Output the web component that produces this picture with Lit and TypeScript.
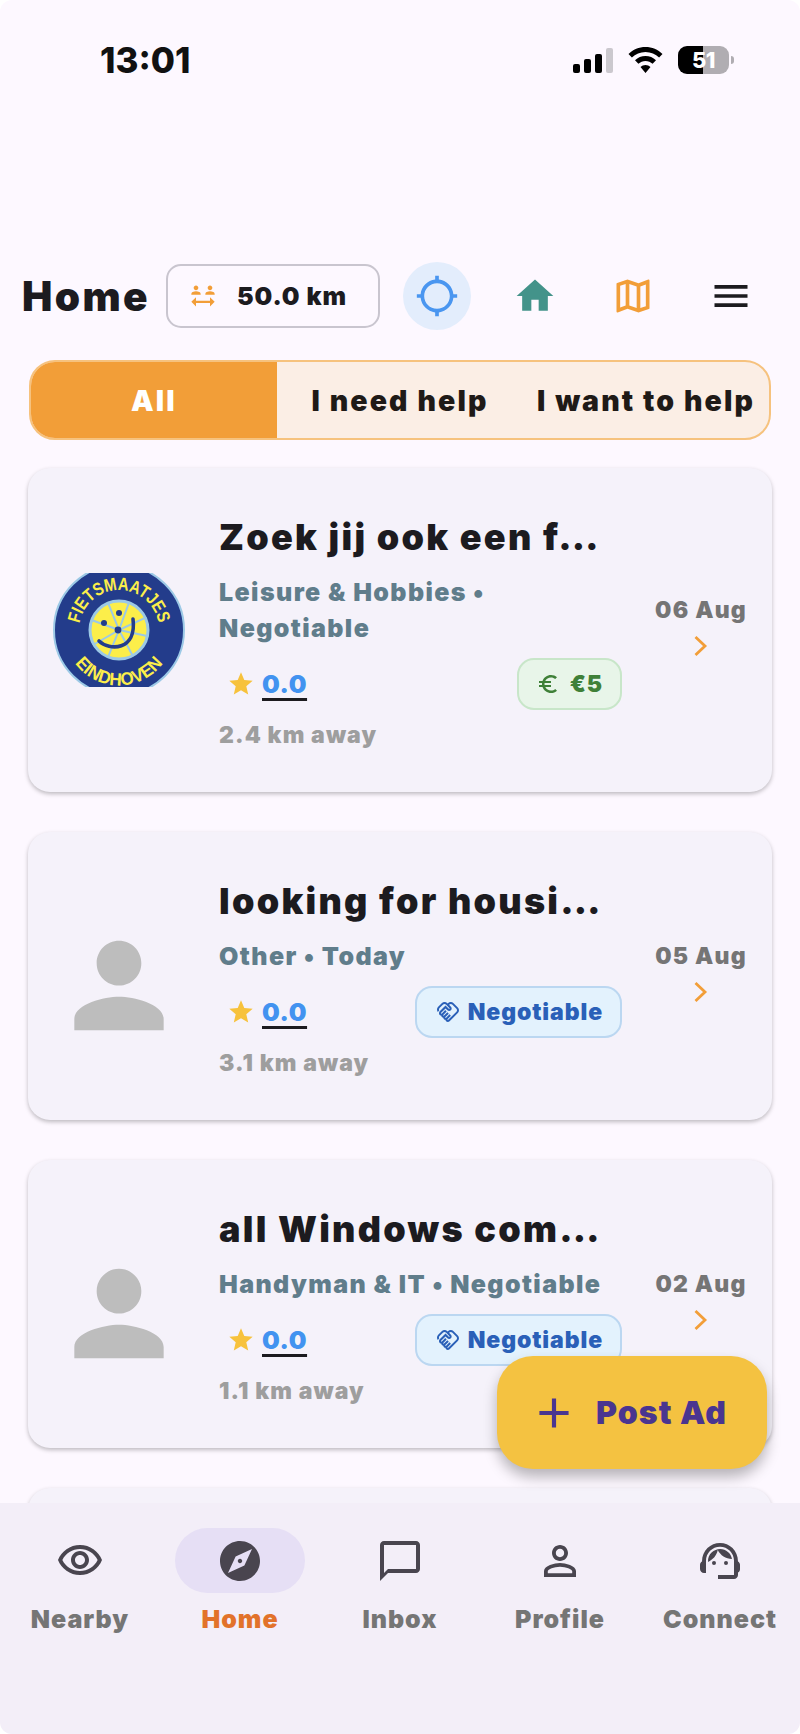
import { LitElement, html, css, svg } from "lit";
import { customElement } from "lit/decorators.js";

const P = {
  social: "M4,5c0-1.1,0.9-2,2-2s2,0.9,2,2S7.1,7,6,7S4,6.1,4,5z M8.78,8.58C7.93,8.21,6.99,8,6,8S4.07,8.21,3.22,8.58C2.48,8.9,2,9.62,2,10.43L2,11h8l0-0.57C10,9.62,9.52,8.9,8.78,8.58z M18,7c1.1,0,2-0.9,2-2s-0.9-2-2-2s-2,0.9-2,2S16.9,7,18,7z M20.78,8.58C19.93,8.21,18.99,8,18,8c-0.99,0-1.93,0.21-2.78,0.58C14.48,8.9,14,9.62,14,10.43L14,11h8l0-0.57C22,9.62,21.52,8.9,20.78,8.58z M22,17l-4-4v3H6v-3l-4,4l4,4v-3h12v3L22,17z",
  gps: "M20.94 11c-.46-4.17-3.77-7.48-7.94-7.94V1h-2v2.06C6.83 3.52 3.52 6.83 3.06 11H1v2h2.06c.46 4.17 3.77 7.48 7.94 7.94V23h2v-2.06c4.17-.46 7.48-3.77 7.94-7.94H23v-2h-2.06zM12 19c-3.87 0-7-3.13-7-7s3.13-7 7-7 7 3.13 7 7-3.13 7-7 7z",
  home: "M10 20v-6h4v6h5v-8h3L12 3 2 12h3v8z",
  map: "M20.5 3l-.16.03L15 5.1 9 3 3.36 4.9c-.21.07-.36.25-.36.48V20.5c0 .28.22.5.5.5l.16-.03L9 18.9l6 2.1 5.64-1.9c.21-.07.36-.25.36-.48V3.5c0-.28-.22-.5-.5-.5zM10 5.47l4 1.4v11.66l-4-1.4V5.47zm-5 .99l3-1.01v11.7l-3 1.16V6.46zm14 11.08l-3 1.01V6.86l3-1.16v11.84z",
  menu: "M3 18h18v-2H3v2zm0-5h18v-2H3v2zm0-7v2h18V6H3z",
  person: "M12 12c2.21 0 4-1.79 4-4s-1.79-4-4-4-4 1.79-4 4 1.79 4 4 4zm0 2c-2.67 0-8 1.34-8 4v2h16v-2c0-2.66-5.33-4-8-4z",
  star: "M12 17.27L18.18 21l-1.64-7.03L22 9.24l-7.19-.61L12 2 9.19 8.63 2 9.24l5.46 4.73L5.82 21z",
  euro: "M15 18.5c-2.51 0-4.68-1.42-5.76-3.5H15v-2H8.58c-.05-.33-.08-.66-.08-1s.03-.67.08-1H15V9H9.24C10.32 6.92 12.5 5.5 15 5.5c1.61 0 3.09.59 4.23 1.57L21 5.3C19.41 3.87 17.3 3 15 3c-3.92 0-7.24 2.51-8.48 6H3v2h3.06c-.04.33-.06.66-.06 1s.02.67.06 1H3v2h3.52c1.24 3.49 4.56 6 8.48 6 2.31 0 4.41-.87 6-2.3l-1.78-1.77c-1.13.98-2.6 1.57-4.22 1.57z",
  hand: "M12.22 19.85c-.18.18-.5.21-.71 0-.18-.18-.21-.5 0-.71l3.39-3.39-1.41-1.41-3.39 3.39c-.19.2-.51.19-.71 0-.21-.21-.18-.53 0-.71l3.39-3.39-1.41-1.41-3.39 3.39c-.18.18-.5.21-.71 0-.19-.19-.19-.51 0-.71l3.39-3.39-1.42-1.41-3.39 3.39c-.18.18-.5.21-.71 0-.19-.2-.19-.51 0-.71L9.52 8.4l1.87 1.86c.95.95 2.59.94 3.54 0 .98-.98.98-2.56 0-3.54l-1.86-1.86.28-.28c.78-.78 2.05-.78 2.83 0l4.24 4.24c.78.78.78 2.05 0 2.83l-8.2 8.2zm9.61-6.78c1.56-1.56 1.56-4.09 0-5.66l-4.24-4.24c-1.56-1.56-4.09-1.56-5.66 0l-.28.28-.28-.28c-1.56-1.56-4.09-1.56-5.66 0L2.17 6.71c-1.42 1.42-1.55 3.63-.4 5.19l1.45-1.45c-.39-.75-.26-1.7.37-2.33l3.54-3.54c.78-.78 2.05-.78 2.83 0l3.56 3.56c.18.18.21.5 0 .71-.21.21-.53.18-.71 0L9.52 5.57l-5.8 5.79c-.98.97-.98 2.56 0 3.54.39.39.89.63 1.42.7.07.52.3 1.02.7 1.42.4.4.9.63 1.42.7.07.52.3 1.02.7 1.42.4.4.9.63 1.42.7.07.54.31 1.03.7 1.42.47.47 1.1.73 1.77.73.67 0 1.3-.26 1.77-.73l8.21-8.19z",
  plus: "M19 13h-6v6h-2v-6H5v-2h6V5h2v6h6v2z",
  eye: "M12 6c3.79 0 7.17 2.13 8.82 5.5C19.17 14.87 15.79 17 12 17s-7.17-2.13-8.82-5.5C4.83 8.13 8.21 6 12 6m0-2C7 4 2.73 7.11 1 11.5 2.73 15.89 7 19 12 19s9.27-3.11 11-7.5C21.27 7.11 17 4 12 4zm0 5c1.38 0 2.5 1.12 2.5 2.5S13.38 14 12 14s-2.5-1.12-2.5-2.5S10.62 9 12 9m0-2c-2.48 0-4.5 2.02-4.5 4.5S9.52 16 12 16s4.5-2.02 4.5-4.5S14.48 7 12 7z",
  explore: "M12 10.9c-.61 0-1.1.49-1.1 1.1s.49 1.1 1.1 1.1c.61 0 1.1-.49 1.1-1.1s-.49-1.1-1.1-1.1zM12 2C6.48 2 2 6.48 2 12s4.48 10 10 10 10-4.48 10-10S17.52 2 12 2zm2.19 12.19L6 18l3.81-8.19L18 6l-3.81 8.19z",
  chat: "M20 2H4c-1.1 0-2 .9-2 2v18l4-4h14c1.1 0 2-.9 2-2V4c0-1.1-.9-2-2-2zm0 14H6l-2 2V4h16v12z",
  profile: "M12 5.9c1.16 0 2.1.94 2.1 2.1s-.94 2.1-2.1 2.1S9.9 9.16 9.9 8s.94-2.1 2.1-2.1m0 9c2.97 0 6.1 1.46 6.1 2.1v1.1H5.9V17c0-.64 3.13-2.1 6.1-2.1M12 4C9.79 4 8 5.79 8 8s1.79 4 4 4 4-1.79 4-4-1.79-4-4-4zm0 9c-2.67 0-8 1.34-8 4v3h16v-3c0-2.66-5.33-4-8-4z",
  agent: "M21 12.22C21 6.73 16.74 3 12 3c-4.69 0-9 3.65-9 9.28-.6.34-1 .98-1 1.72v2c0 1.1.9 2 2 2h1v-6.1c0-3.87 3.13-7 7-7s7 3.13 7 7V19h-8v2h8c1.1 0 2-.9 2-2v-1.22c.59-.31 1-.92 1-1.61v-2.3c0-.7-.41-1.31-1-1.65zM9 14a1 1 0 1 0 0-2 1 1 0 0 0 0 2zm6 0a1 1 0 1 0 0-2 1 1 0 0 0 0 2zm3-2.97C17.52 8.18 15.04 6 12.05 6c-3.03 0-6.29 2.51-6.03 6.45 2.47-1.01 4.33-3.21 4.86-5.89 1.31 2.63 4 4.44 7.12 4.47z",
};

const icon = (d: string, size: number, cls = "") => html`<svg class=${cls} width=${size} height=${size} viewBox="0 0 24 24" fill="currentColor" aria-hidden="true"><path d=${d}></path></svg>`;

const chevron = html`<svg class="chev" width="20" height="24" viewBox="0 0 20 24" fill="none" aria-hidden="true"><path d="M4.500 3 L14 12 L4.500 21" stroke="currentColor" stroke-width="2.800"></path></svg>`;

const spokes = [12, 62, 112, 150, 200, 248, 290, 335].map((a) => {
  const r = (a * Math.PI) / 180;
  return svg`<line x1="66" y1="57" x2=${66 + 30 * Math.cos(r)} y2=${57 + 30 * Math.sin(r)} stroke="#9cc9e6" stroke-width="2"></line>`;
});

const logo = html`<svg class="logo" width="132" height="114" viewBox="0 0 132 114" role="img" aria-label="Fietsmaatjes Eindhoven">
  <defs>
    <clipPath id="lc"><rect x="0" y="0" width="132" height="114"></rect></clipPath>
    <path id="arcT" d="M 27.300 47 A 40 40 0 0 1 104.700 47"></path>
    <path id="arcB" d="M 18.400 85 A 55 55 0 0 0 113.600 85"></path>
  </defs>
  <circle cx="66" cy="57" r="65" fill="#233c8b" stroke="#9cc9e6" stroke-width="2" clip-path="url(#lc)"></circle>
  <circle cx="66" cy="57" r="29" fill="#fcee4a" stroke="#9cc9e6" stroke-width="3"></circle>
  ${spokes}
  <circle cx="51" cy="50" r="3" fill="#233c8b"></circle>
  <circle cx="66" cy="40" r="3" fill="#233c8b"></circle>
  <circle cx="65" cy="57" r="3.400" fill="#233c8b"></circle>
  <path d="M46 68 C56 78 84 78 80 46" stroke="#233c8b" stroke-width="3.600" fill="none" stroke-linecap="round"></path>
  <text class="lt"><textPath href="#arcT" startOffset="50%" text-anchor="middle" textLength="112" lengthAdjust="spacingAndGlyphs">FIETSMAATJES</textPath></text>
  <text class="lt"><textPath href="#arcB" startOffset="50%" text-anchor="middle" textLength="102" lengthAdjust="spacingAndGlyphs">EINDHOVEN</textPath></text>
</svg>`;

type Ad = { title: string; sub: string[]; km: string; date: string; chip: "euro" | "neg"; logo?: boolean };

const ads: Ad[] = [
  { title: "Zoek jij ook een f…", sub: ["Leisure & Hobbies •", "Negotiable"], km: "2.4 km away", date: "06 Aug", chip: "euro", logo: true },
  { title: "looking for housi…", sub: ["Other • Today"], km: "3.1 km away", date: "05 Aug", chip: "neg" },
  { title: "all Windows com…", sub: ["Handyman & IT • Negotiable"], km: "1.1 km away", date: "02 Aug", chip: "neg" },
];

const nav = [
  { label: "Nearby", d: P.eye },
  { label: "Home", d: P.explore, active: true },
  { label: "Inbox", d: P.chat },
  { label: "Profile", d: P.profile },
  { label: "Connect", d: P.agent },
];

@customElement("app-root")
export class AppRoot extends LitElement {
  static styles = css`
    :host { display: block; background: #fff; font-family: "Inter", "Liberation Sans", sans-serif; }
    * { box-sizing: border-box; }
    .screen { position: relative; height: 1734px; overflow: hidden; background: #fdf8ff; border-radius: 12px; color: #1c1b1f; }

    .status { height: 120px; padding: 0 71px 0 100px; display: flex; align-items: center; justify-content: space-between; }
    .time { font-size: 35px; font-weight: 800; letter-spacing: 0; color: #111; }
    .sys { display: flex; align-items: center; gap: 15px; }
    .bars { display: flex; align-items: flex-end; gap: 3.5px; height: 25px; }
    .bars i { width: 7.5px; border-radius: 2px; background: #000; }
    .bars i:nth-child(1) { height: 9px; }
    .bars i:nth-child(2) { height: 14px; }
    .bars i:nth-child(3) { height: 19px; }
    .bars i:nth-child(4) { height: 25px; background: #cbc8ce; }
    .batt { position: relative; width: 51px; height: 28px; border-radius: 9px; background: linear-gradient(90deg, #000 0 49%, #b0adb2 49% 100%); display: flex; align-items: center; justify-content: center; font-size: 22px; font-weight: 800; color: #fff; letter-spacing: -0.5px; }
    .batt::after { content: ""; position: absolute; right: -5px; top: 10px; width: 3px; height: 8px; border-radius: 0 3px 3px 0; background: #b0adb2; }

    .header { margin-top: 142px; height: 68px; padding-left: 22px; display: flex; align-items: center; }
    .h-title { width: 144px; font-size: 40.5px; font-weight: 900; letter-spacing: 2.4px; }
    .range { width: 214px; height: 64px; border: 2px solid #c9c5cf; border-radius: 15px; display: flex; align-items: center; gap: 20px; padding-left: 21px; font-size: 25px; font-weight: 900; letter-spacing: 0.9px; background: #fdf8ff; }
    .range svg { color: #f29e38; }
    .actions { margin-left: 23px; display: flex; gap: 30px; }
    .act { width: 68px; height: 68px; border-radius: 50%; display: flex; align-items: center; justify-content: center; }
    .act.gps { background: #e3edfc; color: #4a96f0; }
    .act.home { color: #43938a; }
    .act.map { color: #f29e38; }
    .act.menu { color: #1c1b1f; }

    .tabs { margin: 30px 29px 0; height: 80px; border: 2px solid #f6c27e; border-radius: 26px; background: #fbeee5; display: grid; grid-template-columns: 246px 246px 1fr; overflow: hidden; }
    .tab { display: flex; align-items: center; justify-content: center; font-size: 28.5px; font-weight: 900; letter-spacing: 2.1px; white-space: nowrap; color: #1f1a17; }
    .tab.on { background: #f29e38; color: #fff; }

    .list { margin: 28px 28px 0; display: flex; flex-direction: column; gap: 40px; }
    .card { background: #f5f2fa; border-radius: 22px; box-shadow: 0 2px 4px rgba(0, 0, 0, 0.25); padding: 44px 14px 41px 25px; display: flex; align-items: center; }
    .card.blank { height: 200px; }
    .pic { width: 134px; display: flex; justify-content: center; color: #bdbdbd; flex: none; margin: 0 33px 0 -1px; }
    .pic.person { padding-top: 16px; }
    .logo { margin-bottom: 4px; overflow: visible; }
    .mid { width: 403px; flex: none; display: flex; flex-direction: column; }
    .title { font-size: 36px; line-height: 50px; font-weight: 900; letter-spacing: 2.25px; white-space: nowrap; }
    .sub { margin-top: 12px; font-size: 25px; line-height: 36px; font-weight: 900; letter-spacing: 1.4px; color: #607d8b; white-space: nowrap; }
    .row { margin-top: 12px; display: flex; align-items: center; justify-content: space-between; }
    .rate { display: flex; align-items: center; gap: 7px; padding-left: 8px; }
    .star { color: #f7c23c; }
    .score { font-size: 25px; font-weight: 900; letter-spacing: 0.6px; color: #4293f0; text-decoration: underline; text-decoration-color: #1c1b1f; text-decoration-thickness: 3px; text-underline-offset: 5px; }
    .chip { height: 52px; border-radius: 17px; border: 2px solid; display: flex; align-items: center; gap: 8px; font-size: 23px; font-weight: 900; letter-spacing: 0.9px; }
    .chip.euro { background: #e8f5e9; border-color: #c8e6c9; color: #3f8038; padding: 0 17px; gap: 10px; }
    .chip.neg { background: #e3f2fd; border-color: #bbd7f1; color: #2a60b8; padding: 0 17px 0 19px; }
    .km { margin-top: 9px; font-size: 23px; line-height: 32px; font-weight: 900; letter-spacing: 1.1px; color: #9e9e9e; white-space: nowrap; }
    .side { flex: 1; display: flex; flex-direction: column; align-items: center; gap: 10px; margin: -9px 0 0 22px; }
    .date { font-size: 23px; font-weight: 900; letter-spacing: 1.2px; color: #757575; white-space: nowrap; }
    .chev { color: #f29e38; }

    .fab { position: absolute; left: 497px; top: 1356px; width: 270px; height: 113px; border-radius: 36px; background: #f4c241; box-shadow: 0 8px 14px rgba(0, 0, 0, 0.28); display: flex; align-items: center; gap: 17px; padding-left: 32px; color: #4a3590; font-size: 32px; font-weight: 900; letter-spacing: 1.1px; }

    .nav { position: absolute; left: 0; right: 0; bottom: 0; height: 231px; background: #f3eef8; padding-top: 25px; display: grid; grid-template-columns: repeat(5, 1fr); align-items: start; }
    .item { display: flex; flex-direction: column; align-items: center; color: #757575; font-size: 25px; font-weight: 900; letter-spacing: 1px; }
    .ico { width: 130px; height: 65px; border-radius: 33px; display: flex; align-items: center; justify-content: center; color: #49454f; margin-bottom: 11px; }
    .item.on { color: #e2722a; }
    .item.on .ico { background: #e6dff5; }

    .lt { font-family: "Liberation Sans", sans-serif; font-size: 18px; font-weight: 700; fill: #fcee4a; }
  `;

  private renderCard(a: Ad) {
    return html`<article class="card">
      <div class="pic ${a.logo ? "" : "person"}">${a.logo ? logo : icon(P.person, 135)}</div>
      <div class="mid">
        <div class="title">${a.title}</div>
        <div class="sub">${a.sub.map((s) => html`<div>${s}</div>`)}</div>
        <div class="row">
          <div class="rate">${icon(P.star, 28, "star")}<span class="score">0.0</span></div>
          ${a.chip === "euro"
            ? html`<div class="chip euro">${icon(P.euro, 24)}<span>€5</span></div>`
            : html`<div class="chip neg">${icon(P.hand, 24)}<span>Negotiable</span></div>`}
        </div>
        <div class="km">${a.km}</div>
      </div>
      <div class="side"><div class="date">${a.date}</div>${chevron}</div>
    </article>`;
  }

  render() {
    return html`<div class="screen">
      <div class="status">
        <div class="time">13:01</div>
        <div class="sys">
          <div class="bars"><i></i><i></i><i></i><i></i></div>
          <svg width="35" height="26" viewBox="0 0 35 26" aria-hidden="true"><path d="M17.500 0C11 0 5 2.600.5 7l3.400 3.600C7.400 7.200 12.200 5 17.500 5s10.100 2.200 13.600 5.600L34.500 7C30 2.600 24 0 17.500 0z M17.500 9c-4 0-7.700 1.600-10.500 4.200l3.400 3.600c1.900-1.800 4.400-2.900 7.100-2.900s5.200 1.100 7.100 2.900l3.400-3.600C25.200 10.600 21.500 9 17.500 9z M17.500 18c-1.900 0-3.700.8-5 2l5 6 5-6c-1.300-1.200-3.100-2-5-2z" fill="#000"></path></svg>
          <div class="batt">51</div>
        </div>
      </div>

      <header class="header">
        <div class="h-title">Home</div>
        <div class="range">${icon(P.social, 28)}<span>50.0 km</span></div>
        <div class="actions">
          <div class="act gps">${icon(P.gps, 44)}</div>
          <div class="act home">${icon(P.home, 44)}</div>
          <div class="act map">${icon(P.map, 44)}</div>
          <div class="act menu">${icon(P.menu, 44)}</div>
        </div>
      </header>

      <div class="tabs">
        <div class="tab on">All</div>
        <div class="tab">I need help</div>
        <div class="tab">I want to help</div>
      </div>

      <div class="list">
        ${ads.map((a) => this.renderCard(a))}
        <article class="card blank"></article>
      </div>

      <div class="fab">${icon(P.plus, 50)}<span>Post Ad</span></div>

      <nav class="nav">
        ${nav.map((n) => html`<div class="item ${n.active ? "on" : ""}"><div class="ico">${icon(n.d, 48)}</div><span>${n.label}</span></div>`)}
      </nav>
    </div>`;
  }
}
